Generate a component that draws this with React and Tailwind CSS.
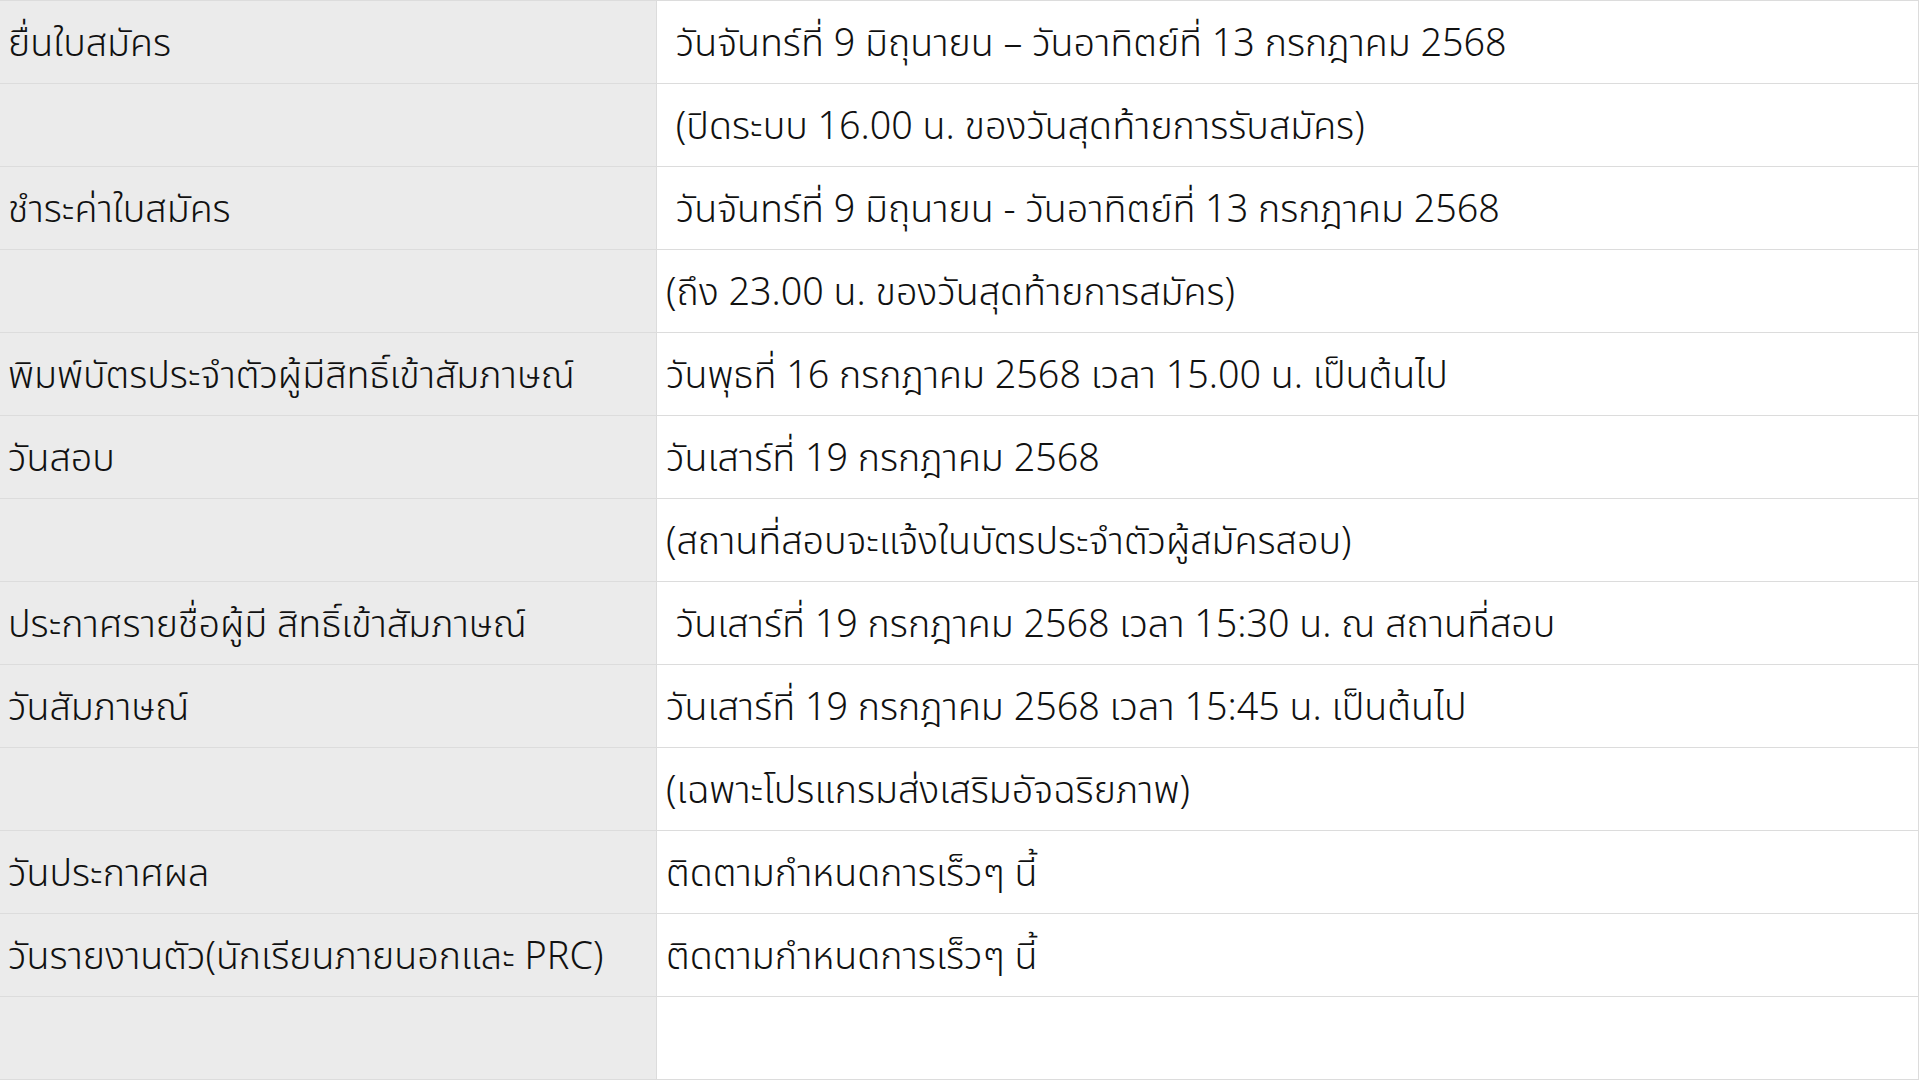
const rows = [
  ["ยื่นใบสมัคร", "\u00a0วันจันทร์ที่ 9 มิถุนายน – วันอาทิตย์ที่ 13 กรกฎาคม 2568"],
  ["", "\u00a0(ปิดระบบ 16.00 น. ของวันสุดท้ายการรับสมัคร)"],
  ["ชำระค่าใบสมัคร", "\u00a0วันจันทร์ที่ 9 มิถุนายน - วันอาทิตย์ที่ 13 กรกฎาคม 2568"],
  ["", "(ถึง 23.00 น. ของวันสุดท้ายการสมัคร)"],
  ["พิมพ์บัตรประจำตัวผู้มีสิทธิ์เข้าสัมภาษณ์", "วันพุธที่ 16 กรกฎาคม 2568 เวลา 15.00 น. เป็นต้นไป"],
  ["วันสอบ", "วันเสาร์ที่ 19 กรกฎาคม 2568"],
  ["", "(สถานที่สอบจะแจ้งในบัตรประจำตัวผู้สมัครสอบ)"],
  ["ประกาศรายชื่อผู้มี สิทธิ์เข้าสัมภาษณ์", "\u00a0วันเสาร์ที่ 19 กรกฎาคม 2568 เวลา 15:30 น. ณ สถานที่สอบ"],
  ["วันสัมภาษณ์", "วันเสาร์ที่ 19 กรกฎาคม 2568 เวลา 15:45 น. เป็นต้นไป"],
  ["", "(เฉพาะโปรแกรมส่งเสริมอัจฉริยภาพ)"],
  ["วันประกาศผล", "ติดตามกำหนดการเร็วๆ นี้"],
  ["วันรายงานตัว(นักเรียนภายนอกและ PRC)", "ติดตามกำหนดการเร็วๆ นี้"],
  ["", ""],
];

export default function App() {
  return (
    <div
      className="w-[1920px] h-[1080px] bg-white overflow-hidden text-[#111111] font-[350]"
      style={{ fontFamily: '"Noto Sans", "Noto Sans Thai", "Noto Sans Thai UI", sans-serif' }}
    >
      <div className="w-[1919px] border-t border-r border-[#dcdcdc]">
        {rows.map(([label, value], i) => (
          <div key={i} className="flex h-[83px] border-b border-[#dcdcdc]">
            <div className="w-[657px] shrink-0 bg-[#ebebeb] border-r border-[#dcdcdc] flex items-center pl-[8px] text-[37.7px] whitespace-pre">
              {label}
            </div>
            <div className="flex-1 flex items-center pl-[9px] text-[37.7px] whitespace-pre">
              {value}
            </div>
          </div>
        ))}
      </div>
    </div>
  );
}
